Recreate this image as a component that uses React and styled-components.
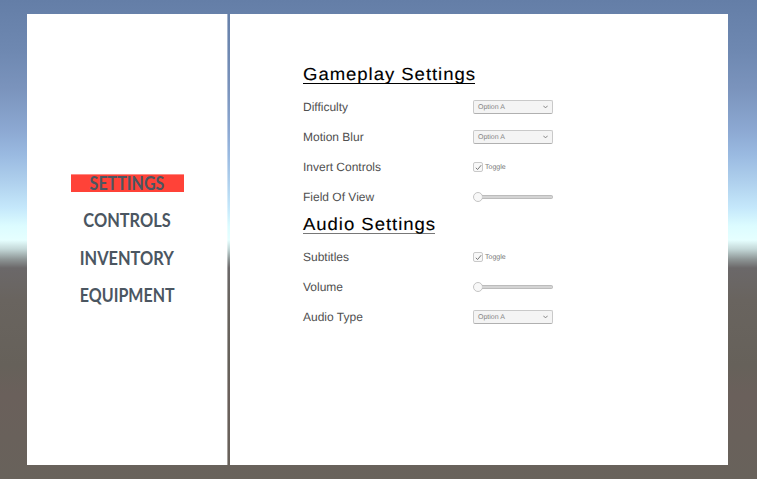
import React from "react";
import styled, { createGlobalStyle } from "styled-components";

const GlobalStyle = createGlobalStyle`
  * { box-sizing: border-box; }
  body { margin: 0; overflow: hidden; font-family: "Liberation Sans", Arial, sans-serif; text-rendering: geometricPrecision; }
`;

const Scene = styled.div`
  width: 757px;
  height: 479px;
  padding: 14px 29px 14px 27px;
  display: flex;
  gap: 2px;
  background: linear-gradient(
    #647ea7 0, #6e88b1 50px, #7b94bd 90px, #8ca8d2 130px, #9abae1 155px,
    #afd0ed 182px, #c5e8fb 208px, #dcfcff 226px, #e6ffff 240px,
    #c4d8d8 249px, #8f9797 259px, #6b6869 268px, #69645f 300px, #66615a 365px,
    #6a605b 395px, #68625b 479px
  );
`;

const Sidebar = styled.nav`
  width: 201px;
  height: 451px;
  padding-top: 160px;
  display: flex;
  flex-direction: column;
  align-items: center;
  gap: 19.5px;
  border-right: 1px solid rgba(255, 255, 255, 0.4);
  background: #fff;
  background-clip: padding-box;
`;

const MenuItem = styled.button`
  width: 113px;
  height: 18px;
  padding: 0;
  border: 0;
  display: flex;
  align-items: center;
  justify-content: center;
  background: ${(p) => (p.$active ? "linear-gradient(#ff8a84 1px, #ff4238 1px)" : "transparent")};
  color: #4b5661;
  font: 700 18px/18px Lato, sans-serif;
  white-space: nowrap;
`;

const MenuText = styled.span`
  flex: none;
  margin-top: -1px;
  transform: scaleX(${(p) => p.$stretch});
`;

const Panel = styled.main`
  width: 498px;
  height: 451px;
  padding: 48px 0 0 73px;
  display: flex;
  flex-direction: column;
  background: #fff;
`;

const HeadingRow = styled.div`
  height: 30px;
  padding-top: 2px;
`;

const Heading = styled.h2`
  width: ${(p) => p.$width}px;
  height: 20px;
  margin: 0;
  border-bottom: 1px solid ${(p) => p.$line};
  color: #000;
  font-size: 17.5px;
  font-weight: 400;
  line-height: 20px;
  letter-spacing: ${(p) => p.$spacing}px;
  white-space: nowrap;
  -webkit-text-stroke: 0.12px #000;
`;

const HeadingText = styled.span`
  display: inline-block;
  transform: scaleX(1.06);
  transform-origin: left;
`;

const Row = styled.div`
  height: 30px;
  display: grid;
  grid-template-columns: 170px 80px;
  align-items: center;
`;

const Label = styled.span`
  color: #505050;
  font-size: 12px;
  line-height: 14px;
`;

const SelectBox = styled.div`
  width: 80px;
  height: 14px;
  padding: 0 4px;
  display: flex;
  align-items: center;
  justify-content: space-between;
  border: 1px solid #c9c9c9;
  border-bottom-color: #b0b0b0;
  border-radius: 2px;
  background: #f4f4f4;
  color: #858585;
  font-size: 7px;
  line-height: 12px;
`;

const SmallText = styled.span`
  padding-top: 1px;
`;

const ToggleBox = styled.div`
  display: flex;
  align-items: center;
  gap: 2px;
  color: #777;
  font-size: 7px;
  line-height: 10px;
`;

const CheckSquare = styled.span`
  width: 10px;
  height: 10px;
  display: flex;
  align-items: center;
  justify-content: center;
  border: 1px solid #c9c9c9;
  border-radius: 2px;
  background: #f8f8f8;
`;

const SliderBox = styled.div`
  width: 80px;
  height: 10px;
  display: flex;
  align-items: center;
`;

const Knob = styled.span`
  width: 10px;
  height: 10px;
  flex: none;
  border: 1px solid #c4c4c4;
  border-radius: 50%;
  background: #f8f8f8;
`;

const Track = styled.span`
  flex: 1;
  height: 4px;
  margin-left: -1px;
  border: 1px solid #bcbcbc;
  border-left: 0;
  border-radius: 0 2px 2px 0;
  background: #d4d4d4;
`;

const Select = () => (
  <SelectBox>
    <SmallText>Option A</SmallText>
    <svg width="5" height="4" viewBox="0 0 5 4" fill="none" stroke="#777" strokeWidth="0.9">
      <path d="M.3 .7 2.5 2.9 4.7 .7" />
    </svg>
  </SelectBox>
);

const Toggle = () => (
  <ToggleBox>
    <CheckSquare>
      <svg width="7" height="7" viewBox="0 0 7 7" fill="none" stroke="#686868" strokeWidth="0.9">
        <path d="M.8 3.8 2.6 5.5 6.2 1.2" />
      </svg>
    </CheckSquare>
    <SmallText>Toggle</SmallText>
  </ToggleBox>
);

const Slider = () => (
  <SliderBox>
    <Knob />
    <Track />
  </SliderBox>
);

const controls = { select: Select, toggle: Toggle, slider: Slider };

const menu = [
  { text: "SETTINGS", stretch: 0.89 },
  { text: "CONTROLS", stretch: 0.91 },
  { text: "INVENTORY", stretch: 0.91 },
  { text: "EQUIPMENT", stretch: 0.89 },
];

const sections = [
  {
    title: "Gameplay Settings",
    width: 172,
    spacing: 0.9,
    line: "#000",
    rows: [
      ["Difficulty", "select"],
      ["Motion Blur", "select"],
      ["Invert Controls", "toggle"],
      ["Field Of View", "slider"],
    ],
  },
  {
    title: "Audio Settings",
    width: 132,
    spacing: 0.9,
    line: "#777",
    rows: [
      ["Subtitles", "toggle"],
      ["Volume", "slider"],
      ["Audio Type", "select"],
    ],
  },
];

export default function App() {
  return (
    <>
      <GlobalStyle />
      <Scene>
        <Sidebar>
          {menu.map((m, i) => (
            <MenuItem key={m.text} $active={i === 0}>
              <MenuText $stretch={m.stretch}>{m.text}</MenuText>
            </MenuItem>
          ))}
        </Sidebar>
        <Panel>
          {sections.map((s) => (
            <React.Fragment key={s.title}>
              <HeadingRow>
                <Heading $width={s.width} $spacing={s.spacing} $line={s.line}>
                  <HeadingText>{s.title}</HeadingText>
                </Heading>
              </HeadingRow>
              {s.rows.map(([label, kind]) => {
                const Control = controls[kind];
                return (
                  <Row key={label}>
                    <Label>{label}</Label>
                    <Control />
                  </Row>
                );
              })}
            </React.Fragment>
          ))}
        </Panel>
      </Scene>
    </>
  );
}
